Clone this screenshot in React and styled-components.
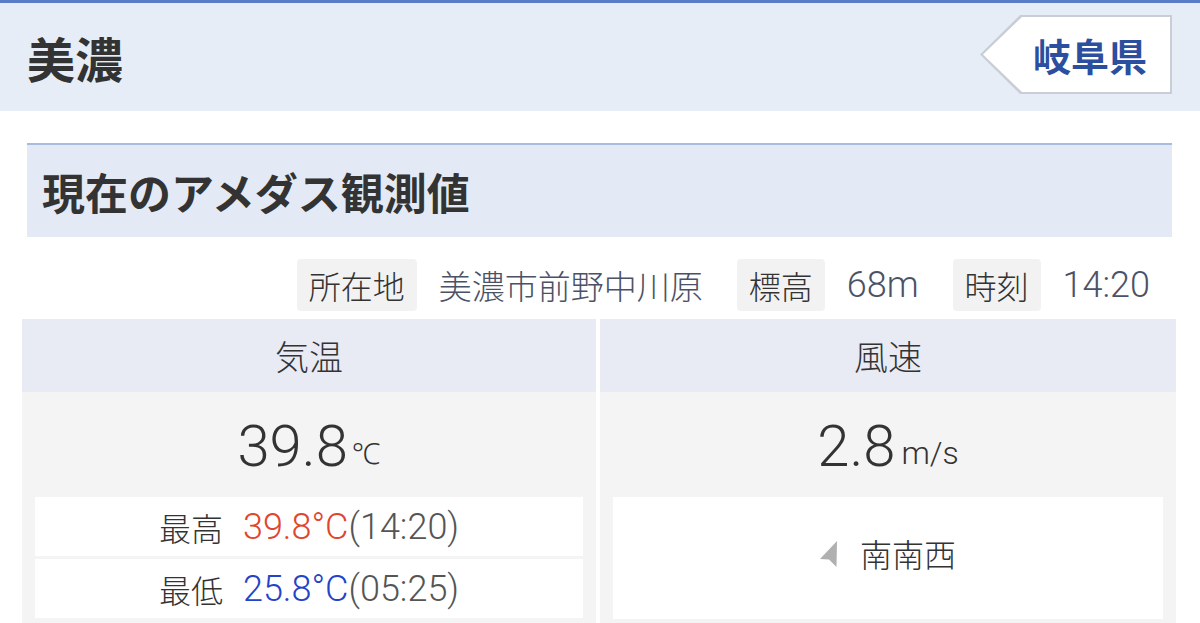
import styled, { createGlobalStyle } from "styled-components";

const GlobalStyle = createGlobalStyle`
  body {
    margin: 0;
    background: #ffffff;
    font-family: "Noto Sans CJK JP", "Noto Sans", sans-serif;
    color: #333333;
  }
`;

const Page = styled.div`
  width: 1200px;
  height: 623px;
  overflow: hidden;
  border-top: 3px solid #5b7cc6;
  box-sizing: border-box;
`;

const Header = styled.header`
  height: 108px;
  background: #e7edf6;
  display: flex;
  align-items: center;
  justify-content: space-between;
  padding: 0 28px 0 27px;
`;

const Title = styled.h1`
  margin: 0;
  font-size: 48px;
  font-weight: 700;
  color: #333;
`;

const Badge = styled.div`
  position: relative;
  height: 79px;
  margin-top: -5px;
  width: 192px;
  display: flex;
  align-items: center;
  justify-content: flex-end;
  padding-right: 25px;
  box-sizing: border-box;
  color: #2c4e9e;
  font-size: 38px;
  font-weight: 700;
  background: #c9ced6;
  clip-path: polygon(40px 0, 100% 0, 100% 100%, 40px 100%, 0 50%);
  &::before {
    content: "";
    position: absolute;
    inset: 2px 2px 2px 3px;
    background: #ffffff;
    clip-path: polygon(39px 0, 100% 0, 100% 100%, 39px 100%, 0 50%);
  }
  span {
    position: relative;
  }
`;

const Section = styled.section`
  margin: 32px 28px 0 27px;
  height: 92px;
  border-top: 2px solid #a8bcdf;
  background: #e4eaf5;
  display: flex;
  align-items: center;
  padding-left: 15px;
  font-size: 43px;
  font-weight: 700;
  color: #333;
`;

const InfoRow = styled.div`
  margin-top: 22px;
  height: 52px;
  display: flex;
  justify-content: flex-end;
  align-items: stretch;
  padding-right: 50px;
  gap: 22px;
  font-weight: 300;
`;

const Tag = styled.div`
  background: #f2f2f2;
  border-radius: 4px;
  padding: 0 12px;
  display: flex;
  align-items: center;
  font-size: 32px;
  color: #333;
`;

const InfoValue = styled.div`
  display: flex;
  align-items: center;
  font-family: ${(p) => (p.$num ? '"Roboto", ' : "")}"Noto Sans CJK JP", sans-serif;
  font-size: ${(p) => (p.$num ? 36 : 33)}px;
  color: #4b5267;
  margin-right: ${(p) => p.$after || 0}px;
`;

const Table = styled.div`
  margin: 8px 24px 0 22px;
  display: grid;
  grid-template-columns: 574px 1fr;
  gap: 4px;
  font-weight: 300;
`;

const Column = styled.div`
  background: #f4f4f4;
  height: 320px;
`;

const ColHead = styled.div`
  height: 73px;
  background: #e8ebf4;
  display: flex;
  align-items: center;
  justify-content: center;
  font-size: 34px;
  color: #333;
`;

const Value = styled.div`
  height: 105px;
  display: flex;
  align-items: center;
  justify-content: center;
  font-family: "Roboto", "Noto Sans", sans-serif;
  font-weight: 300;
  color: #333;
  font-size: 58px;
  padding-top: 2px;
  box-sizing: border-box;
`;

const Unit = styled.span`
  font-size: ${(p) => p.$size || 29}px;
  margin-left: ${(p) => p.$gap || 2}px;
  margin-top: 14px;
`;

const SubList = styled.div`
  margin: 0 13px;
  display: flex;
  flex-direction: column;
  gap: 3px;
`;

const SubBox = styled.div`
  background: #ffffff;
  height: ${(p) => p.$h || 59}px;
  display: flex;
  align-items: center;
  justify-content: center;
  font-size: 32px;
  color: #333;
  padding-bottom: ${(p) => p.$lift || 0}px;
  box-sizing: border-box;
`;

const Label = styled.span`
  margin-right: 20px;
`;

const Reading = styled.span`
  font-family: "Roboto", "Noto Sans", sans-serif;
  font-weight: 300;
  font-size: 36px;
  color: ${(p) => p.$color};
`;

const Time = styled.span`
  font-family: "Roboto", "Noto Sans", sans-serif;
  font-weight: 300;
  font-size: 36px;
  color: #555;
`;

const DirIcon = styled.svg`
  width: 18px;
  height: 26px;
  margin-right: 22px;
  margin-top: 2px;
`;

function Temp({ label, value, time, color }) {
  return (
    <SubBox>
      <Label>{label}</Label>
      <Reading $color={color}>{value}°C</Reading>
      <Time>({time})</Time>
    </SubBox>
  );
}

export default function App() {
  return (
    <>
      <GlobalStyle />
      <Page>
        <Header>
          <Title>美濃</Title>
          <Badge>
            <span>岐阜県</span>
          </Badge>
        </Header>
        <Section>現在のアメダス観測値</Section>
        <InfoRow>
          <Tag>所在地</Tag>
          <InfoValue $after={12}>美濃市前野中川原</InfoValue>
          <Tag>標高</Tag>
          <InfoValue $num $after={12}>68m</InfoValue>
          <Tag>時刻</Tag>
          <InfoValue $num>14:20</InfoValue>
        </InfoRow>
        <Table>
          <Column>
            <ColHead>気温</ColHead>
            <Value>
              39.8<Unit $gap={4}>℃</Unit>
            </Value>
            <SubList>
              <Temp label="最高" value="39.8" time="14:20" color="#e0462e" />
              <Temp label="最低" value="25.8" time="05:25" color="#2343c8" />
            </SubList>
          </Column>
          <Column>
            <ColHead>風速</ColHead>
            <Value>
              2.8<Unit $gap={6} $size={32}>m/s</Unit>
            </Value>
            <SubList>
              <SubBox $h={122} $lift={10}>
                <DirIcon viewBox="0 0 18 26">
                  <polygon points="17,0 0,18 9,18.5 16.5,26" fill="#b0b0b0" />
                </DirIcon>
                南南西
              </SubBox>
            </SubList>
          </Column>
        </Table>
      </Page>
    </>
  );
}
